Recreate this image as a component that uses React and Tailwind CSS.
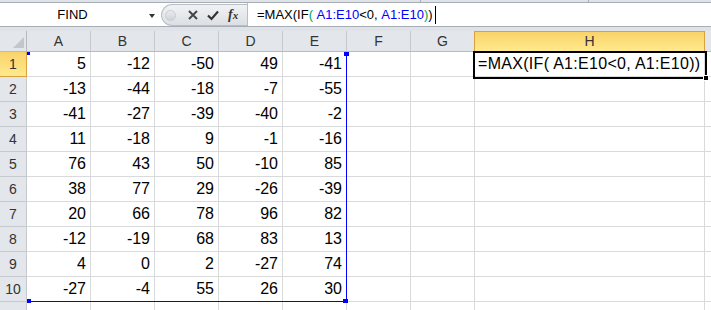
import React from 'react'

const rows = [
  [5, -12, -50, 49, -41],
  [-13, -44, -18, -7, -55],
  [-41, -27, -39, -40, -2],
  [11, -18, 9, -1, -16],
  [76, 43, 50, -10, 85],
  [38, 77, 29, -26, -39],
  [20, 66, 78, 96, 82],
  [-12, -19, 68, 83, 13],
  [4, 0, 2, -27, 74],
  [-27, -4, 55, 26, 30],
]

const cols = ['A', 'B', 'C', 'D', 'E', 'F', 'G']

function FormulaBar() {
  return (
    <div className="flex h-[24px] bg-white border-b border-[#a7adb5]">
      <div className="flex w-[161px] items-center">
        <div className="w-[145px] text-center text-[13px] text-black">FIND</div>
        <div className="ml-[4px] mt-[2px] h-0 w-0 border-l-[3px] border-r-[3px] border-t-[4px] border-l-transparent border-r-transparent border-t-[#333]" />
      </div>
      <div className="flex w-[86px] items-center rounded-l-full border border-r-0 border-[#b9bec5] bg-gradient-to-b from-[#f1f2f4] to-[#dcdfe3] mt-[1px]">
        <div className="ml-[3px] h-[11px] w-[11px] rounded-full border border-[#c9cdd2] bg-gradient-to-b from-[#e9ebee] to-[#cfd3d8]" />
        <svg className="ml-[12px]" width="10" height="10" viewBox="0 0 10 10">
          <path d="M1 1 L9 9 M9 1 L1 9" stroke="#454545" strokeWidth="2" />
        </svg>
        <svg className="ml-[9px]" width="12" height="11" viewBox="0 0 12 11">
          <path d="M1 5.5 L4.5 9 L11 1.5" stroke="#333" strokeWidth="2.2" fill="none" />
        </svg>
        <span className="ml-[9px] font-['Liberation_Serif',serif] italic font-bold text-[14px] leading-none text-[#333]">
          f<span className="text-[11px]">x</span>
        </span>
      </div>
      <div className="flex flex-1 items-center border-l border-[#b9bec5] pl-[9px] text-[13px] whitespace-nowrap">
        <span className="text-black">=MAX(IF</span>
        <span className="text-[#00a052]">(</span>
        <span className="text-[#0000ff]">&nbsp;A1:E10</span>
        <span className="text-black">&lt;0,&nbsp;</span>
        <span className="text-[#0000ff]">A1:E10</span>
        <span className="text-[#00a052]">)</span>
        <span className="text-black">)</span>
        <span className="ml-[2px] h-[18px] w-[1px] bg-black" />
      </div>
    </div>
  )
}

function Sheet() {
  return (
    <div className="relative">
      <div className="flex h-[21px] bg-[#e3e6ea] border-b border-[#b6bbc2]">
        <div className="w-[27px] border-r border-[#b6bbc2] flex items-end justify-end pr-[2px] pb-[3px]">
          <svg width="11" height="11" viewBox="0 0 11 11">
            <path d="M11 0 L11 11 L0 11 Z" fill="#c3c7cc" />
          </svg>
        </div>
        {cols.map(c => (
          <div key={c} className="w-[64px] border-r border-[#c6cacf] flex items-center justify-center text-[14px] text-[#333]">{c}</div>
        ))}
        <div className="-ml-px w-[231px] border border-b-0 border-[#d9a23d] bg-gradient-to-b from-[#f9d36a] to-[#ffe98c] flex items-center justify-center text-[14px] text-[#333]">H</div>
        <div className="flex-1" />
      </div>
      {[...rows, null].map((r, i) => (
        <div key={i} className="flex h-[25px]">
          {i === 0 ? (
            <div className="w-[27px] border-r border-b border-[#d9a23d] bg-gradient-to-b from-[#f9d36a] to-[#ffe98c] flex items-center justify-center text-[14px] text-[#333]">1</div>
          ) : (
            <div className="w-[27px] border-r border-b border-[#c6cacf] bg-[#e3e6ea] flex items-center justify-center text-[14px] text-[#333]">{r ? i + 1 : ''}</div>
          )}
          {cols.map((c, j) => (
            <div key={c} className="w-[64px] border-r border-b border-[#d9dadc] flex items-end justify-end pr-[4px] pb-[3px] text-[16px] leading-[18px] text-black">
              {r && j < 5 ? r[j] : ''}
            </div>
          ))}
          <div className="w-[230px] border-r border-b border-[#d9dadc] flex items-end pl-[3px] pb-[3px] text-[16px] leading-[18px] text-black whitespace-nowrap tracking-[0.3px]">
            {i === 0 ? '=MAX(IF( A1:E10<0, A1:E10))' : ''}
          </div>
          <div className="flex-1 border-b border-[#d9dadc]" />
        </div>
      ))}

      {/* range highlight A1:E10 */}
      <div className="absolute left-[346px] top-[21px] h-[250px] w-px bg-[#0000ff]" />
      <div className="absolute left-[27px] top-[270px] h-px w-[320px] bg-[#0000ff]" />
      <div className="absolute left-[27px] top-[21px] h-[3px] w-[3px] bg-[#0000ff]" />
      <div className="absolute left-[344px] top-[21px] h-[4px] w-[5px] bg-[#0000ff]" />
      <div className="absolute left-[27px] top-[268px] h-[4px] w-[4px] bg-[#0000ff]" />
      <div className="absolute left-[343px] top-[268px] h-[4px] w-[5px] bg-[#0000ff]" />

      {/* active cell H1 */}
      <div className="absolute left-[473px] top-[20px] h-[28px] w-[234px] border-2 border-black" />
      <div className="absolute left-[703px] top-[44px] h-[6px] w-[6px] border border-white bg-black" />
    </div>
  )
}

export default function App() {
  return (
    <div className="w-[711px] h-[310px] overflow-hidden bg-white font-['Liberation_Sans',Arial,sans-serif]">
      <div className="flex h-[3px] bg-[#dfe3e8] border-b border-[#a7adb5]">
        <div className="w-[420px]" />
        <div className="w-px bg-[#a7adb5]" />
        <div className="w-[167px]" />
        <div className="w-px bg-[#a7adb5]" />
      </div>
      <FormulaBar />
      <div className="h-[4px] bg-[#dfe3e8]" />
      <Sheet />
    </div>
  )
}
